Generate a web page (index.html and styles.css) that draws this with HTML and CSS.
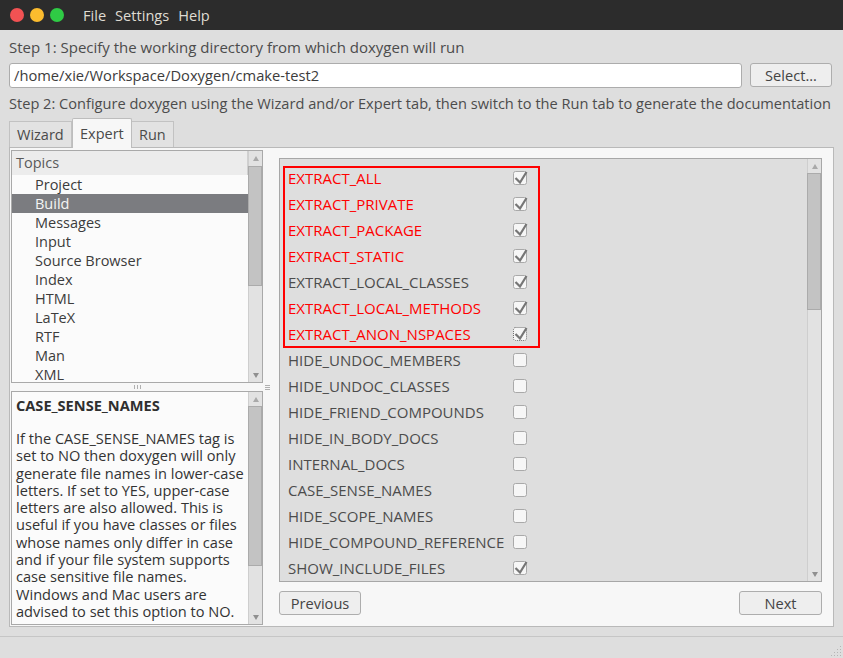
FILE: index.html
```html
<!DOCTYPE html>
<html>
<head>
<meta charset="utf-8">
<link rel="stylesheet" href="styles.css">
</head>
<body>
<div class="window">
  <header class="titlebar">
    <div class="lights">
      <span class="light red"></span>
      <span class="light yellow"></span>
      <span class="light green"></span>
    </div>
    <nav class="menu">
      <span class="menu-item">File</span>
      <span class="menu-item">Settings</span>
      <span class="menu-item">Help</span>
    </nav>
  </header>

  <main class="content">
    <div class="label step1">Step 1: Specify the working directory from which doxygen will run</div>
    <div class="dirrow">
      <div class="input">/home/xie/Workspace/Doxygen/cmake-test2</div>
      <div class="btn select">Select...</div>
    </div>
    <div class="label step2">Step 2: Configure doxygen using the Wizard and/or Expert tab, then switch to the Run tab to generate the documentation</div>

    <div class="tabs">
      <div class="tab">Wizard</div>
      <div class="tab active">Expert</div>
      <div class="tab">Run</div>
    </div>

    <div class="panel">
      <div class="leftcol">
        <div class="topics box">
          <div class="topics-list">
            <div class="topics-header"><span>Topics</span></div>
            <div class="topic">Project</div>
            <div class="topic selected">Build</div>
            <div class="topic">Messages</div>
            <div class="topic">Input</div>
            <div class="topic">Source Browser</div>
            <div class="topic">Index</div>
            <div class="topic">HTML</div>
            <div class="topic">LaTeX</div>
            <div class="topic">RTF</div>
            <div class="topic">Man</div>
            <div class="topic">XML</div>
          </div>
          <div class="vscroll">
            <div class="arrow up"></div>
            <div class="track"><div class="thumb thumb-topics"></div></div>
            <div class="arrow down"></div>
          </div>
        </div>

        <div class="hsplit"><span class="grip-v"></span></div>

        <div class="desc box">
          <div class="desc-text">
            <div class="desc-title">CASE_SENSE_NAMES</div>
            <p class="desc-body">If the CASE_SENSE_NAMES tag is<br>set to NO then doxygen will only<br>generate file names in lower-case<br>letters. If set to YES, upper-case<br>letters are also allowed. This is<br>useful if you have classes or files<br>whose names only differ in case<br>and if your file system supports<br>case sensitive file names.<br>Windows and Mac users are<br>advised to set this option to NO.</p>
          </div>
          <div class="vscroll">
            <div class="arrow up"></div>
            <div class="track"><div class="thumb thumb-desc"></div></div>
            <div class="arrow down"></div>
          </div>
        </div>
      </div>

      <div class="vsplit"><span class="grip-h"></span></div>

      <div class="rightcol">
        <div class="options">
          <div class="opt-list">
            <div class="opt hl"><span class="opt-name">EXTRACT_ALL</span><svg class="cb" viewBox="0 0 14 14"><rect x="0.5" y="0.5" width="13" height="13" rx="2"/><path d="M2.5 7 L7 11.5 L13.5 1"/></svg></div>
            <div class="opt hl"><span class="opt-name">EXTRACT_PRIVATE</span><svg class="cb" viewBox="0 0 14 14"><rect x="0.5" y="0.5" width="13" height="13" rx="2"/><path d="M2.5 7 L7 11.5 L13.5 1"/></svg></div>
            <div class="opt hl"><span class="opt-name">EXTRACT_PACKAGE</span><svg class="cb" viewBox="0 0 14 14"><rect x="0.5" y="0.5" width="13" height="13" rx="2"/><path d="M2.5 7 L7 11.5 L13.5 1"/></svg></div>
            <div class="opt hl"><span class="opt-name">EXTRACT_STATIC</span><svg class="cb" viewBox="0 0 14 14"><rect x="0.5" y="0.5" width="13" height="13" rx="2"/><path d="M2.5 7 L7 11.5 L13.5 1"/></svg></div>
            <div class="opt"><span class="opt-name">EXTRACT_LOCAL_CLASSES</span><svg class="cb" viewBox="0 0 14 14"><rect x="0.5" y="0.5" width="13" height="13" rx="2"/><path d="M2.5 7 L7 11.5 L13.5 1"/></svg></div>
            <div class="opt hl"><span class="opt-name">EXTRACT_LOCAL_METHODS</span><svg class="cb" viewBox="0 0 14 14"><rect x="0.5" y="0.5" width="13" height="13" rx="2"/><path d="M2.5 7 L7 11.5 L13.5 1"/></svg></div>
            <div class="opt hl"><span class="opt-name">EXTRACT_ANON_NSPACES</span><svg class="cb focus" viewBox="0 0 14 14"><rect x="0.5" y="0.5" width="13" height="13" rx="2"/><path d="M2.5 7 L7 11.5 L13.5 1"/></svg></div>
            <div class="opt"><span class="opt-name">HIDE_UNDOC_MEMBERS</span><svg class="cb" viewBox="0 0 14 14"><rect x="0.5" y="0.5" width="13" height="13" rx="2"/></svg></div>
            <div class="opt"><span class="opt-name">HIDE_UNDOC_CLASSES</span><svg class="cb" viewBox="0 0 14 14"><rect x="0.5" y="0.5" width="13" height="13" rx="2"/></svg></div>
            <div class="opt"><span class="opt-name">HIDE_FRIEND_COMPOUNDS</span><svg class="cb" viewBox="0 0 14 14"><rect x="0.5" y="0.5" width="13" height="13" rx="2"/></svg></div>
            <div class="opt"><span class="opt-name">HIDE_IN_BODY_DOCS</span><svg class="cb" viewBox="0 0 14 14"><rect x="0.5" y="0.5" width="13" height="13" rx="2"/></svg></div>
            <div class="opt"><span class="opt-name">INTERNAL_DOCS</span><svg class="cb" viewBox="0 0 14 14"><rect x="0.5" y="0.5" width="13" height="13" rx="2"/></svg></div>
            <div class="opt"><span class="opt-name">CASE_SENSE_NAMES</span><svg class="cb" viewBox="0 0 14 14"><rect x="0.5" y="0.5" width="13" height="13" rx="2"/></svg></div>
            <div class="opt"><span class="opt-name">HIDE_SCOPE_NAMES</span><svg class="cb" viewBox="0 0 14 14"><rect x="0.5" y="0.5" width="13" height="13" rx="2"/></svg></div>
            <div class="opt"><span class="opt-name">HIDE_COMPOUND_REFERENCE</span><svg class="cb" viewBox="0 0 14 14"><rect x="0.5" y="0.5" width="13" height="13" rx="2"/></svg></div>
            <div class="opt"><span class="opt-name">SHOW_INCLUDE_FILES</span><svg class="cb" viewBox="0 0 14 14"><rect x="0.5" y="0.5" width="13" height="13" rx="2"/><path d="M2.5 7 L7 11.5 L13.5 1"/></svg></div>
            <div class="redbox"></div>
          </div>
          <div class="vscroll">
            <div class="arrow up"></div>
            <div class="track"><div class="thumb thumb-opts"></div></div>
            <div class="arrow down"></div>
          </div>
        </div>
        <div class="navrow">
          <div class="btn nav">Previous</div>
          <div class="btn nav">Next</div>
        </div>
      </div>
    </div>
  </main>

  <footer class="statusbar"><span class="sizegrip"></span></footer>
</div>
</body>
</html>
```

FILE: styles.css
```css
* { box-sizing: border-box; }

html, body {
  margin: 0;
  padding: 0;
}

body {
  width: 843px;
  height: 658px;
  overflow: hidden;
  background: #dedede;
  font-family: "Open Sans", "Noto Sans", sans-serif;
  font-size: 14.6px;
  color: #4c4c4c;
}

.window {
  width: 843px;
  height: 658px;
  display: flex;
  flex-direction: column;
}

/* ---------- title bar ---------- */
.titlebar {
  height: 30px;
  background: #2c2c2c;
  display: flex;
  align-items: center;
  padding-left: 10px;
  flex: none;
}

.lights {
  display: flex;
  gap: 6px;
}

.light {
  width: 14px;
  height: 14px;
  border-radius: 50%;
  display: block;
}
.light.red { background: #f15253; }
.light.yellow { background: #fbbc2e; }
.light.green { background: #2fcb45; }

.menu {
  display: flex;
  margin-left: 19px;
  gap: 9px;
  font-size: 14.6px;
  color: #dfdbd2;
}

/* ---------- main content ---------- */
.content {
  padding: 8px 9px 0 9px;
  flex: none;
}

.label {
  height: 18px;
  line-height: 18px;
  white-space: nowrap;
  color: #4c4c4c;
}

.step1 { font-size: 15px; }
.step2 { margin-top: 6px; font-size: 14.6px; }

.dirrow {
  margin-top: 7px;
  display: flex;
  height: 25px;
}

.input {
  width: 733px;
  height: 25px;
  background: #ffffff;
  border: 1px solid #acacac;
  border-radius: 3px;
  padding-left: 4px;
  line-height: 23px;
  color: #3c3c3c;
  font-size: 14.7px;
}

.btn {
  background: #eeeeee;
  border: 1px solid #adadad;
  border-radius: 3px;
  text-align: center;
  color: #444444;
}

.btn.select {
  margin-left: 8px;
  width: 82px;
  height: 24px;
  line-height: 22px;
}

/* ---------- tabs ---------- */
.tabs {
  margin-top: 6px;
  height: 29px;
  display: flex;
  align-items: flex-end;
}

.tab {
  height: 26px;
  line-height: 25px;
  padding: 0 7px;
  background: #e2e2e2;
  border: 1px solid #c2c2c2;
  border-bottom: none;
  color: #4a4a4a;
  font-size: 14.5px;
}
.tab:first-child { width: 63px; }
.tab.active {
  line-height: 30px;
  width: 60px;
  background: #f7f7f7;
  border-color: #bdbdbd;
  border-radius: 2px 2px 0 0;
  position: relative;
  margin-bottom: -1px;
  height: 30px;
  z-index: 1;
}
.tab:last-child { width: 42px; border-left: none; }

/* ---------- panel ---------- */
.panel {
  height: 480px;
  background: #f7f7f7;
  border: 1px solid #b9b9b9;
  padding: 2px 11px 1px 1px;
  display: flex;
}

.leftcol {
  width: 252px;
  display: flex;
  flex-direction: column;
}

.box {
  border: 1px solid #a9a9a9;
  background: #fbfbfb;
  display: flex;
}

.topics { height: 233px; }

.topics-list {
  flex: 1;
  overflow: hidden;
  color: #3c3c3c;
  font-size: 14.5px;
}

.topics-header {
  height: 24px;
  background: #ececec;
  padding-left: 4px;
  line-height: 23px;
  color: #5a5a5a;
  border-right: 1px solid #d0d0d0;
}

.topic {
  height: 19px;
  line-height: 19px;
  padding-left: 23px;
  white-space: nowrap;
}

.topic.selected {
  background: #7b7c80;
  color: #f4f4f4;
}

/* scrollbars */
.vscroll {
  width: 14px;
  flex: none;
  background: #e2e2e2;
  border-left: 1px solid #cecece;
  display: flex;
  flex-direction: column;
}

.arrow {
  height: 14px;
  display: flex;
  align-items: center;
  justify-content: center;
}
.arrow::before {
  content: "";
  width: 0;
  height: 0;
  border-left: 3px solid transparent;
  border-right: 3px solid transparent;
}
.arrow.up::before { border-bottom: 5px solid #a9a9a9; }
.arrow.down::before { border-top: 5px solid #8f8f8f; }

.track {
  flex: 1;
  position: relative;
}

.thumb {
  background: #c3c3c3;
  border: 1px solid #ababab;
  margin-left: -1px;
}
.thumb-topics { margin-top: 1px; height: 120px; }
.thumb-desc { height: 160px; }
.thumb-opts { height: 137px; }

.hsplit {
  height: 8px;
  display: flex;
  justify-content: center;
  align-items: center;
}

.grip-v {
  width: 7px;
  height: 4px;
  border-left: 1px solid #b0b0b0;
  border-right: 1px solid #b0b0b0;
  position: relative;
}
.grip-v::after {
  content: "";
  position: absolute;
  left: 2px;
  top: 0;
  width: 1px;
  height: 4px;
  background: #b0b0b0;
}

.desc { height: 234px; }

.desc-text {
  flex: 1;
  overflow: hidden;
  padding: 4px 0 0 4px;
  color: #333333;
  font-size: 14.6px;
  white-space: nowrap;
}

.desc-title {
  height: 19px;
  line-height: 19px;
  font-weight: bold;
  color: #2f2f2f;
}

.desc-body {
  margin: 15px 0 0 0;
  line-height: 17.3px;
}

/* vertical splitter */
.vsplit {
  width: 16px;
  display: flex;
  align-items: flex-start;
  padding-top: 235px;
  padding-left: 2px;
}
.grip-h {
  width: 5px;
  height: 5px;
  border-top: 1px solid #b0b0b0;
  border-bottom: 1px solid #b0b0b0;
  position: relative;
}
.grip-h::after {
  content: "";
  position: absolute;
  left: 0;
  top: 1px;
  width: 5px;
  height: 1px;
  background: #b0b0b0;
}

/* ---------- right column ---------- */
.rightcol {
  width: 543px;
  padding-top: 8px;
  display: flex;
  flex-direction: column;
}

.options {
  height: 424px;
  border: 1px solid #a7a7a7;
  background: #dedede;
  display: flex;
}

.opt-list {
  flex: 1;
  position: relative;
  padding-top: 6px;
  padding-left: 8px;
}

.opt {
  height: 26px;
  display: flex;
  align-items: center;
  color: #4c4c4c;
  font-size: 15px;
}

.opt.hl { color: #ff0000; }

.opt-name {
  width: 225px;
  white-space: nowrap;
}

.cb {
  width: 14px;
  height: 14px;
  overflow: visible;
}
.cb rect {
  fill: #f6f6f6;
  stroke: #a9a9a9;
  stroke-width: 1;
}
.cb path {
  fill: none;
  stroke: #767676;
  stroke-width: 2.2;
}
.cb.focus rect {
  stroke: #6e6e6e;
  stroke-dasharray: 1 1;
}

.redbox {
  position: absolute;
  left: 3px;
  top: 7px;
  width: 257px;
  height: 182px;
  border: 2px solid #ff0000;
  pointer-events: none;
}

.navrow {
  margin-top: 9px;
  display: flex;
  justify-content: space-between;
}

.btn.nav {
  width: 82px;
  height: 24px;
  line-height: 22px;
  font-size: 14.6px;
}
.btn.nav:last-child { width: 83px; }

/* ---------- status bar ---------- */
.statusbar {
  margin-top: 9px;
  flex: 1;
  border-top: 1px solid #c6c6c6;
  position: relative;
}

.sizegrip {
  position: absolute;
  right: 2px;
  bottom: 2px;
  width: 11px;
  height: 11px;
  background-image: radial-gradient(circle, #b5b5b5 0.9px, transparent 1px);
  background-size: 3px 3px;
  clip-path: polygon(100% 0, 100% 100%, 0 100%);
}
```
